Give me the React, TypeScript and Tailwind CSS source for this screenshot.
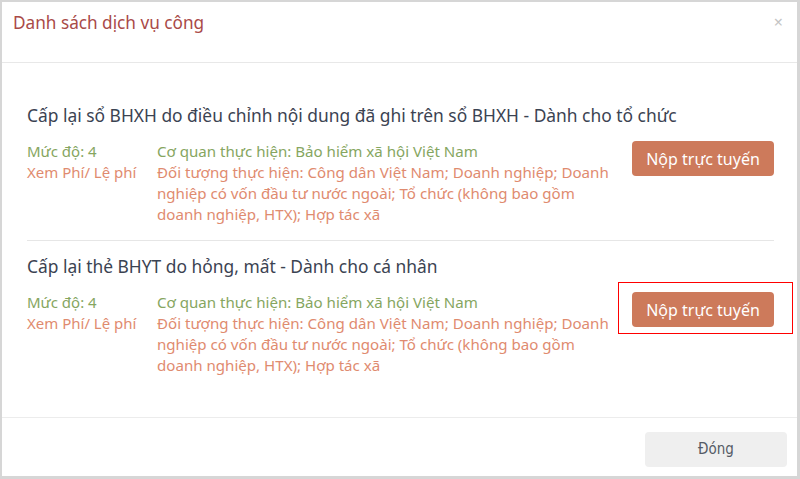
import React from "react"

type Service = {
  title: string
  level: string
  agency: string
  targets: string[]
  highlighted?: boolean
}

const services: Service[] = [
  {
    title: "Cấp lại sổ BHXH do điều chỉnh nội dung đã ghi trên sổ BHXH - Dành cho tổ chức",
    level: "Mức độ: 4",
    agency: "Cơ quan thực hiện: Bảo hiểm xã hội Việt Nam",
    targets: [
      "Đối tượng thực hiện: Công dân Việt Nam; Doanh nghiệp; Doanh",
      "nghiệp có vốn đầu tư nước ngoài; Tổ chức (không bao gồm",
      "doanh nghiệp, HTX); Hợp tác xã",
    ],
  },
  {
    title: "Cấp lại thẻ BHYT do hỏng, mất - Dành cho cá nhân",
    level: "Mức độ: 4",
    agency: "Cơ quan thực hiện: Bảo hiểm xã hội Việt Nam",
    targets: [
      "Đối tượng thực hiện: Công dân Việt Nam; Doanh nghiệp; Doanh",
      "nghiệp có vốn đầu tư nước ngoài; Tổ chức (không bao gồm",
      "doanh nghiệp, HTX); Hợp tác xã",
    ],
    highlighted: true,
  },
]

function ServiceItem({ service, last }: { service: Service; last: boolean }) {
  return (
    <div className={last ? "pt-[13px]" : "border-b border-[#e6e6e6] pb-[15px]"}>
      <div className="text-[17.4px] leading-[24px] text-[#3b4352]">{service.title}</div>
      <div className="mt-[14px] flex">
        <div className="w-[130px] shrink-0 text-[15px] leading-[21px]">
          <div className="text-[#86a65f]">{service.level}</div>
          <div className="text-[#df8b6f]">Xem Phí/ Lệ phí</div>
        </div>
        <div className="flex-1 whitespace-nowrap text-[15.1px] leading-[21px]">
          <div className="text-[#86a65f]">{service.agency}</div>
          <div className="text-[#df8b6f]">
            {service.targets.map((line) => (
              <div key={line}>{line}</div>
            ))}
          </div>
        </div>
        <div className="relative w-[142px] shrink-0">
          {service.highlighted && (
            <div className="absolute -top-[10px] -left-[14px] h-[52px] w-[175px] border-[1.5px] border-[#ff0000]" />
          )}
          <button className="h-[35px] w-[142px] rounded-[4px] bg-[#cd7a5b] text-[16px] text-white">
            Nộp trực tuyến
          </button>
        </div>
      </div>
    </div>
  )
}

export default function App() {
  return (
    <div className="h-[479px] w-[800px] bg-[#d6d6d6] pt-[2px] pl-[2px] pr-[3px] pb-[3px] font-['Noto_Sans',sans-serif]">
      <div className="flex h-full flex-col bg-white">
        <header className="flex h-[61px] items-start justify-between border-b border-[#e8e8e8] pt-[9px] pl-[11px] pr-[14px]">
          <h2 className="text-[17.2px] leading-[24px] text-[#a94a48]">Danh sách dịch vụ công</h2>
          <span className="mt-[1px] text-[16px] leading-[20px] text-[#c4c4c4]">×</span>
        </header>
        <main className="flex-1 pt-[40px] pl-[25px] pr-[23px]">
          {services.map((s, i) => (
            <ServiceItem key={s.title} service={s} last={i === services.length - 1} />
          ))}
        </main>
        <footer className="flex h-[59px] justify-end border-t border-[#ececec] pt-[14px] pr-[10px]">
          <button className="h-[35px] w-[142px] rounded-[4px] bg-[#efefef] font-['DejaVu_Sans_Condensed','DejaVu_Sans',sans-serif] text-[15px] text-[#555b66]">
            Đóng
          </button>
        </footer>
      </div>
    </div>
  )
}
